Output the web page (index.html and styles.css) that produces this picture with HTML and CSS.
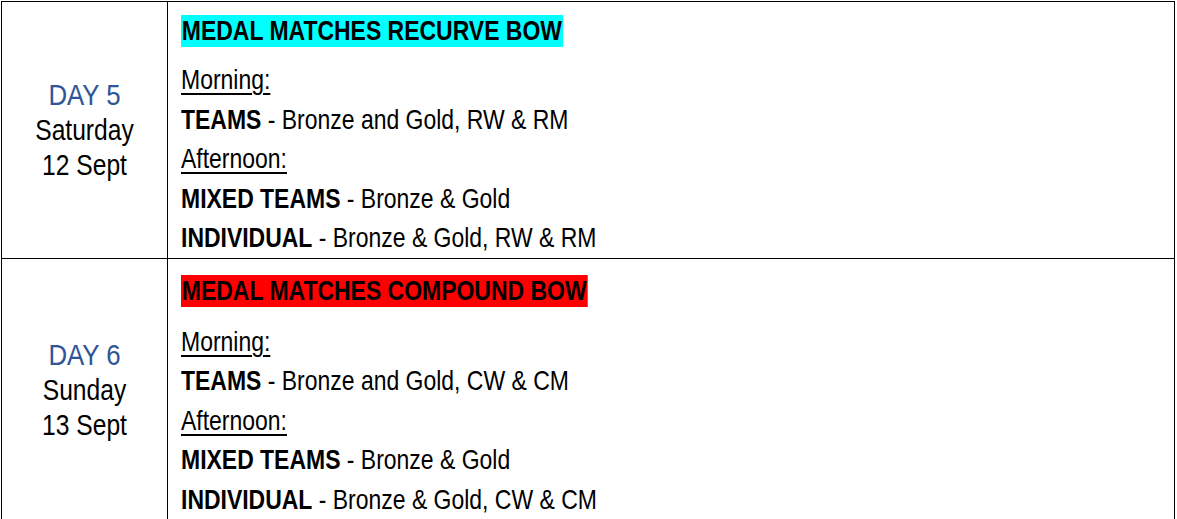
FILE: index.html
```html
<!DOCTYPE html>
<html lang="en">
<head>
<meta charset="utf-8">
<title>Medal Matches Schedule</title>
<link rel="stylesheet" href="styles.css">
</head>
<body>
<table class="schedule">
  <tr class="row row-first">
    <td class="day">
      <div class="day-line day-num">DAY 5</div>
      <div class="day-line">Saturday</div>
      <div class="day-line">12 Sept</div>
    </td>
    <td class="events">
      <div class="heading"><span class="tag tag-recurve">MEDAL MATCHES RECURVE BOW</span></div>
      <div class="line"><span class="session">Morning:</span></div>
      <div class="line"><b>TEAMS</b> - Bronze and Gold, RW &amp; RM</div>
      <div class="line"><span class="session">Afternoon:</span></div>
      <div class="line"><b>MIXED TEAMS</b> - Bronze &amp; Gold</div>
      <div class="line"><b>INDIVIDUAL</b> - Bronze &amp; Gold, RW &amp; RM</div>
    </td>
  </tr>
  <tr class="row row-second">
    <td class="day">
      <div class="day-line day-num">DAY 6</div>
      <div class="day-line">Sunday</div>
      <div class="day-line">13 Sept</div>
    </td>
    <td class="events">
      <div class="heading"><span class="tag tag-compound">MEDAL MATCHES COMPOUND BOW</span></div>
      <div class="line"><span class="session">Morning:</span></div>
      <div class="line"><b>TEAMS</b> - Bronze and Gold, CW &amp; CM</div>
      <div class="line"><span class="session">Afternoon:</span></div>
      <div class="line"><b>MIXED TEAMS</b> - Bronze &amp; Gold</div>
      <div class="line"><b>INDIVIDUAL</b> - Bronze &amp; Gold, CW &amp; CM</div>
    </td>
  </tr>
</table>
</body>
</html>
```

FILE: styles.css
```css
html {
  overflow: hidden;
}
body {
  margin: 0;
  background: #fff;
  color: #000;
  font-family: "Liberation Sans", Arial, sans-serif;
  font-size: 28px;
}
.schedule {
  margin: 1px 0 0 1px;
  width: 1174px;
  border-collapse: collapse;
  table-layout: fixed;
}
.schedule td {
  border: 1px solid #000;
  padding: 0;
}
.day {
  width: 165px;
  text-align: center;
  vertical-align: middle;
  line-height: 35px;
  font-size: 30px;
}
.day-line {
  transform: scaleX(0.82);
  transform-origin: 50% 50%;
  white-space: nowrap;
}
.day-num {
  color: #2f5597;
  transform: scaleX(0.86);
}
.schedule .events {
  vertical-align: top;
  padding: 13px 0 0 13px;
}
.schedule .row-second .events {
  padding-top: 16px;
}
.row-second {
  height: 263px;
}
.heading {
  line-height: 32px;
  margin-bottom: 13px;
  transform: scaleX(0.82);
  transform-origin: 0 50%;
  white-space: nowrap;
}
.row-second .heading {
  margin-bottom: 15px;
}
.tag {
  display: inline-block;
  font-weight: bold;
  padding: 0 1px;
}
.tag-recurve {
  background: #00ffff;
}
.tag-compound {
  background: #ff0000;
}
.line {
  line-height: 39.5px;
  white-space: nowrap;
  transform: scaleX(0.82);
  transform-origin: 0 50%;
}
.line b {
  font-weight: bold;
}
.session {
  text-decoration: underline;
  text-decoration-thickness: 2px;
  text-underline-offset: 4px;
}
```
